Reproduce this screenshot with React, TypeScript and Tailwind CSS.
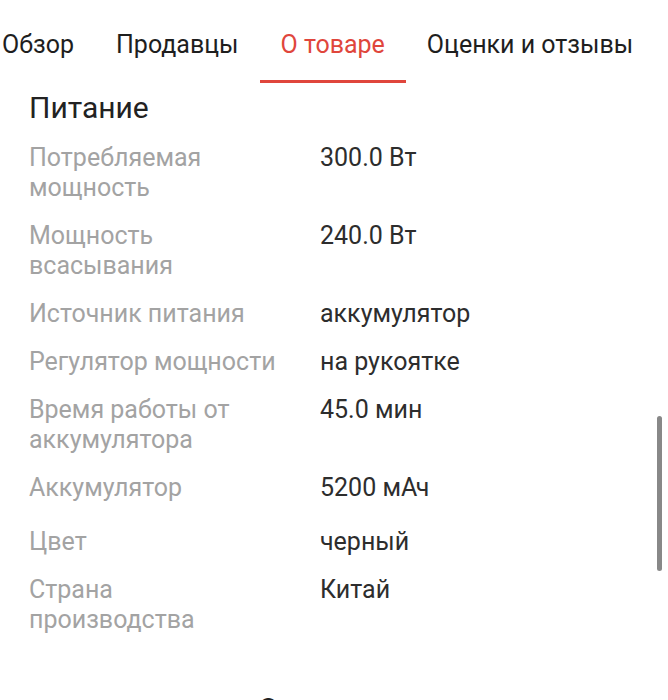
import React from "react"

const TABS = ["Обзор", "Продавцы", "О товаре", "Оценки и отзывы"]
const ACTIVE = 2

const SPECS: { label: string; value: string; extra?: boolean }[] = [
  { label: "Потребляемая мощность", value: "300.0 Вт" },
  { label: "Мощность всасывания", value: "240.0 Вт" },
  { label: "Источник питания", value: "аккумулятор" },
  { label: "Регулятор мощности", value: "на рукоятке" },
  { label: "Время работы от аккумулятора", value: "45.0 мин" },
  { label: "Аккумулятор", value: "5200 мАч" },
  { label: "Цвет", value: "черный", extra: true },
  { label: "Страна производства", value: "Китай" },
]

export default function App() {
  return (
    <div className="relative h-[700px] w-[668px] overflow-hidden bg-white font-['Roboto',sans-serif]">
      {/* Tabs */}
      <div className="ml-[-19px] flex h-[83px] whitespace-nowrap">
        {TABS.map((tab, i) => (
          <div key={tab} className="flex flex-col">
            <span
              className={`px-[21px] pt-[30px] pb-[20px] text-[25px] leading-[30px] ${
                i === ACTIVE ? "text-[#e0463c]" : "text-[#1e1e1e]"
              }`}
            >
              {tab}
            </span>
            <div className={`h-[3px] ${i === ACTIVE ? "bg-[#e0463c]" : "bg-transparent"}`} />
          </div>
        ))}
      </div>

      {/* Section */}
      <div className="px-[29px]">
        <h2 className="mt-[7px] text-[30px] leading-[36px] text-[#222]">Питание</h2>
        <div className="mt-[17px] flex flex-col gap-[18px]">
          {SPECS.map((s) => (
            <div key={s.label} className={`flex text-[25px] leading-[30px] ${s.extra ? "mt-[6px]" : ""}`}>
              <div className="w-[291px] shrink-0 pr-[40px] text-[#a3a3a3]">{s.label}</div>
              <div className="text-[#2d2d2d]">{s.value}</div>
            </div>
          ))}
        </div>
        {/* next section title, scrolled mostly out of view */}
        <h2 className="mt-[56px] pl-[229px] text-[30px] leading-[36px] text-[#222]">Описание</h2>
      </div>

      {/* Scrollbar */}
      <div className="absolute left-[657px] top-[416px] h-[155px] w-[5px] rounded-full bg-[#888]" />
    </div>
  )
}
